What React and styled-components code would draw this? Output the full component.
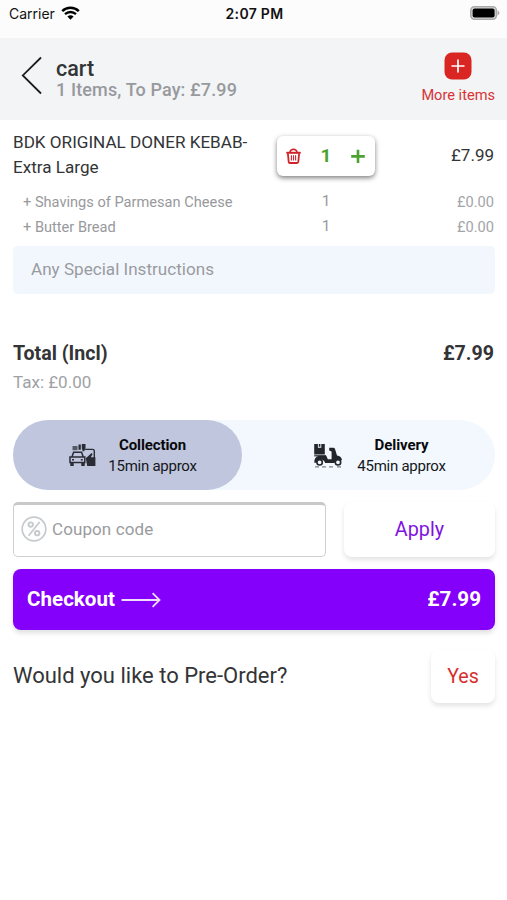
import React, { useState } from 'react';
import styled, { createGlobalStyle } from 'styled-components';

const GlobalStyle = createGlobalStyle`
  * {
    box-sizing: border-box;
  }

  body {
    margin: 0;
    background-color: white;
    color: #333436;
    font-family: Roboto, 'Liberation Sans', sans-serif;
  }

  button,
  input {
    font-family: inherit;
    margin: 0;
    padding: 0;
    border: 0;
    background: none;
    outline: none;
  }

  svg {
    display: block;
    flex: none;
  }
`;

const Screen = styled.div`
  width: 507px;
  height: 900px;
  overflow: hidden;
`;

const Text = styled.span`
  display: block;
  white-space: nowrap;
  color: ${(p) => p.color || '#333436'};
  font-size: ${(p) => p.size}px;
  font-weight: ${(p) => p.weight || 400};
  line-height: ${(p) => p.line || 24}px;
  letter-spacing: ${(p) => p.spacing || 0}px;
`;

const StatusBar = styled.div`
  display: grid;
  grid-template-columns: 1fr auto 1fr;
  align-items: center;
  height: 38px;
  padding: 0 7px 12px 9px;
  background-color: #fcfcfc;
  color: #111;
  font-family: Inter, sans-serif;
  font-size: 14px;
`;

const Carrier = styled.div`
  display: flex;
  align-items: center;
  gap: 6px;
`;

const Clock = styled.div`
  font-weight: 600;
  letter-spacing: 0.3px;
`;

const Battery = styled.div`
  display: flex;
  justify-content: flex-end;
`;

const Header = styled.header`
  display: flex;
  height: 82px;
  padding: 14px 12px 0 21px;
  background-color: #f2f4f6;
`;

const BackButton = styled.button`
  width: 35px;
  height: 46px;
  cursor: pointer;
`;

const Heading = styled.div`
  flex: 1;
  padding-top: 4px;
`;

const MoreItems = styled.button`
  display: flex;
  flex-direction: column;
  align-items: center;
  gap: 5px;
  height: 53px;
  cursor: pointer;
`;

const Content = styled.main`
  padding: 0 12px 0 13px;
`;

const ItemRow = styled.div`
  display: grid;
  grid-template-columns: 264px 98px 1fr;
  height: 70px;
  padding-top: 10px;
`;

const Quantity = styled.div`
  display: flex;
  align-items: center;
  justify-content: space-between;
  height: 40px;
  margin-top: 6px;
  padding: 0 10px 0 9px;
  border-radius: 6px;
  background-color: white;
  box-shadow: 0 2px 5px rgba(0, 0, 0, 0.5);
`;

const IconButton = styled.button`
  cursor: pointer;
`;

const Price = styled.div`
  display: flex;
  justify-content: flex-end;
  padding: ${(p) => p.top || 0}px 1px 0 0;
`;

const Addons = styled.div`
  height: 49px;
`;

const AddonRow = styled.div`
  display: grid;
  grid-template-columns: 254px 98px 1fr;
  height: 24.5px;
  padding-left: 10px;
`;

const AddonCount = styled.div`
  display: flex;
  justify-content: center;
  margin-top: -1px;
`;

const Instructions = styled.input`
  display: block;
  width: 100%;
  height: 48px;
  margin-top: 7px;
  padding: 0 18px 2px;
  border-radius: 5px;
  background-color: #f2f7fe;
  font-size: 17.1px;

  &::placeholder {
    color: #9a9b9e;
    opacity: 1;
  }
`;

const TotalRow = styled.div`
  display: flex;
  justify-content: space-between;
  margin-top: 48px;
`;

const Tax = styled.div`
  margin-top: 4px;
`;

const Switcher = styled.div`
  display: flex;
  height: 70px;
  margin-top: 26px;
  border-radius: 35px;
  background-color: #f2f8fe;
`;

const Option = styled.button`
  display: flex;
  align-items: center;
  justify-content: center;
  gap: ${(p) => p.gap}px;
  width: ${(p) => p.width}px;
  padding-left: ${(p) => p.indent}px;
  border-radius: 35px;
  background-color: ${(p) => (p.selected ? '#c0c6dd' : 'transparent')};
  cursor: pointer;
`;

const OptionLabel = styled.div`
  display: flex;
  flex-direction: column;
  align-items: center;
  padding-top: 1px;
`;

const CouponRow = styled.div`
  display: flex;
  justify-content: space-between;
  height: 55px;
  margin-top: 12px;
`;

const CouponField = styled.label`
  display: flex;
  align-items: center;
  gap: 5px;
  width: 313px;
  padding: 0 8px 3px 7px;
  border: 1px solid #cfcfd1;
  border-top: 3px solid #c9c9ca;
  border-radius: 5px;
`;

const CouponInput = styled.input`
  flex: 1;
  min-width: 0;
  font-size: 17px;
  letter-spacing: 0.1px;

  &::placeholder {
    color: #9a9b9e;
    opacity: 1;
  }
`;

const CardButton = styled.button`
  display: flex;
  align-items: center;
  justify-content: center;
  width: ${(p) => p.width}px;
  height: ${(p) => p.height}px;
  border-radius: 8px;
  background-color: white;
  box-shadow: 0 3px 5px rgba(0, 0, 0, 0.11);
  cursor: pointer;
`;

const Checkout = styled.button`
  display: flex;
  align-items: center;
  width: 100%;
  height: 61px;
  margin-top: 12px;
  padding: 0 14px 2px;
  border-radius: 8px;
  background-color: #8500fa;
  box-shadow: 0 3px 5px rgba(0, 0, 0, 0.13);
  cursor: pointer;

  svg {
    margin: 2px auto 0 6px;
  }
`;

const PreOrder = styled.div`
  display: flex;
  align-items: center;
  justify-content: space-between;
  margin-top: 20px;
`;

const Question = styled.div`
  padding-bottom: 1px;
`;

const WifiIcon = () => (
  <svg width="19" height="14" viewBox="0 0 19 14" fill="none" stroke="#000">
    <path d="M1.2 5.2a12 12 0 0 1 16.6 0" strokeWidth="2.5" />
    <path d="M4 8.2a8 8 0 0 1 11 0" strokeWidth="2.3" />
    <path d="M9.5 13.7 6.4 10.6a4.5 4.5 0 0 1 6.2 0Z" fill="#000" stroke="none" />
  </svg>
);

const BatteryIcon = () => (
  <svg width="30" height="14" viewBox="0 0 30 14">
    <rect x="0.8" y="0.8" width="25.6" height="12.4" rx="3.6" fill="#ddd" stroke="#aaa" strokeWidth="1.6" />
    <rect x="2.6" y="2.4" width="22" height="9.2" rx="2" fill="#000" />
    <path d="M27.6 4.6c2.4.8 2.4 4 0 4.8z" fill="#aaa" />
  </svg>
);

const BackIcon = () => (
  <svg width="22" height="46" viewBox="0 0 22 46" fill="none" stroke="#1c1c1e" strokeWidth="1.8">
    <path d="M20 5.5 1.8 23.4 20 41.5" />
  </svg>
);

const AddIcon = () => (
  <svg width="28" height="28" viewBox="0 0 28 28">
    <rect x="0.5" y="0.5" width="27" height="27" rx="7.5" fill="#d92623" />
    <path d="M14 7.5v13M7.5 14h13" stroke="#fff" strokeWidth="1.7" />
  </svg>
);

const TrashIcon = () => (
  <svg width="15" height="16" viewBox="0 0 15 16" fill="none" stroke="#d2232a" strokeWidth="1.5">
    <path d="M0.3 4.8h14.4" strokeWidth="2" />
    <path d="M3.8 4.4Q4.6 1.3 7.5 1.3t3.7 3.1" />
    <path d="M1.9 5.5l.8 8.3q.1 1.2 1.2 1.2h7.2q1.1 0 1.2-1.2l.8-8.3" strokeWidth="1.8" />
    <path d="M5.4 7.2v5.4M9.6 7.2v5.4M7.5 7.2v5.4" strokeWidth="1.1" />
  </svg>
);

const PlusIcon = () => (
  <svg width="14" height="14" viewBox="0 0 14 14" stroke="#4aa32f" strokeWidth="2.6">
    <path d="M7 0.8v13.2M0.2 7.4h13.6" />
  </svg>
);

const CollectionIcon = () => (
  <svg width="27" height="24" viewBox="0 0 27 24" fill="#292c35">
    <path d="M3.5 3h5v4.2h-5z" opacity="0.7" />
    <path d="M9.5 1.5h2.3v5.3H9.5zM12.8 1h3.7v4.2l-1.3 3h-1.5l-.9-3z" />
    <path
      d="M3.1 13.4 4.6 9.2h8l1.5 4.2M1 14h14.8v5.6H1zM3 16.7h2M11.8 16.7h2"
      fill="none"
      stroke="#292c35"
      strokeWidth="1.5"
    />
    <path d="M1.3 19h3.4v4H1.3zM12.3 19h3.4v4h-3.4z" />
    <path d="M16.2 6.4h7.4q1.7 0 1.7 1.7v7.3" fill="none" stroke="#292c35" strokeWidth="1.4" />
    <path d="M16.8 15.2l5.8-5.3 1 1.3-1.8 3h4.6V23h-8.2z" />
  </svg>
);

const DeliveryIcon = () => (
  <svg width="30" height="25" viewBox="0 0 30 25" fill="#23262b">
    <path d="M1.2 1h3.7v3.8h3.4V1h3.5v10.6H1.2zM5.8 1h1.6v2.8H5.8z" />
    <path d="M16.2 4.7h4.2q1.2 0 1.6 1.2l2 6.6q4 .5 5 4.3l-1.2 1h-2.2q-3.4-1.3-4.2 2.2h-9.3q-.8-3.6-4.8-3.6-3.5 0-3.7 3.4H1.3q-.4-5.4 4.5-7h7.5l1.5 3.5h3.8V8.4l-2.4-.8z" />
    <path d="M1.2 12.2H13v1.2H1.2z" />
    <circle cx="6.6" cy="19.3" r="2.7" fill="#f2f8fe" stroke="#23262b" strokeWidth="1.6" />
    <circle cx="25" cy="19.3" r="2.7" fill="#f2f8fe" stroke="#23262b" strokeWidth="1.6" />
    <path d="M2 23.9h4M9 23.9h4M16 23.9h4M24 23.9h4" stroke="#555" strokeWidth="0.9" />
  </svg>
);

const PercentIcon = () => (
  <svg width="26" height="26" viewBox="0 0 26 26" fill="none" stroke="#c5cacc" strokeWidth="1.7">
    <circle cx="13" cy="13" r="11.8" />
    <circle cx="9.7" cy="8.6" r="2.2" strokeWidth="1.9" />
    <circle cx="16.2" cy="17.2" r="2.2" strokeWidth="1.9" />
    <path d="M18.6 6 7.6 19.8" />
  </svg>
);

const ArrowIcon = () => (
  <svg width="40" height="16" viewBox="0 0 40 16" fill="none" stroke="#f0dcff" strokeWidth="1.8">
    <path d="M0.5 8h38M31.6 1.2 38.5 8l-6.9 6.8" />
  </svg>
);

const addons = [
  { name: 'Shavings of Parmesan Cheese', count: 1, price: '£0.00' },
  { name: 'Butter Bread', count: 1, price: '£0.00' },
];

export default function App() {
  const [method, setMethod] = useState('collection');

  return (
    <Screen>
      <GlobalStyle />
      <StatusBar>
        <Carrier>
          Carrier
          <WifiIcon />
        </Carrier>
        <Clock>2:07 PM</Clock>
        <Battery>
          <BatteryIcon />
        </Battery>
      </StatusBar>
      <Header>
        <BackButton aria-label="Back">
          <BackIcon />
        </BackButton>
        <Heading>
          <Text size={21.5} weight={500} line={25}>
            cart
          </Text>
          <Text size={18} weight={500} line={18} spacing={0.13} color="#98999d">
            1 Items, To Pay: £7.99
          </Text>
        </Heading>
        <MoreItems>
          <AddIcon />
          <Text size={14.6} line={21} color="#d83335">
            More items
          </Text>
        </MoreItems>
      </Header>
      <Content>
        <ItemRow>
          <div>
            <Text size={17.1} line={24.5}>
              BDK ORIGINAL DONER KEBAB-
            </Text>
            <Text size={17.1} line={24.5}>
              Extra Large
            </Text>
          </div>
          <Quantity>
            <IconButton aria-label="Remove">
              <TrashIcon />
            </IconButton>
            <Text size={19} weight={700} color="#4aa32f">
              1
            </Text>
            <IconButton aria-label="Add one">
              <PlusIcon />
            </IconButton>
          </Quantity>
          <Price top={13}>
            <Text size={17}>£7.99</Text>
          </Price>
        </ItemRow>
        <Addons>
          {addons.map((addon) => (
            <AddonRow key={addon.name}>
              <Text size={14.6} color="#98999c">
                + {addon.name}
              </Text>
              <AddonCount>
                <Text size={15.5} color="#98999c">
                  {addon.count}
                </Text>
              </AddonCount>
              <Price>
                <Text size={14.6} color="#a3a4a7">
                  {addon.price}
                </Text>
              </Price>
            </AddonRow>
          ))}
        </Addons>
        <Instructions placeholder="Any Special Instructions" />
        <TotalRow>
          <Text size={19.6} weight={700}>
            Total (Incl)
          </Text>
          <Price>
            <Text size={19.6} weight={700}>
              £7.99
            </Text>
          </Price>
        </TotalRow>
        <Tax>
          <Text size={17} color="#a0a1a5">
            Tax: £0.00
          </Text>
        </Tax>
        <Switcher>
          <Option width={229} gap={12} indent={11} selected={method === 'collection'} onClick={() => setMethod('collection')}>
            <CollectionIcon />
            <OptionLabel>
              <Text size={15} weight={700} line={21} spacing={-0.1} color="#08090c">
                Collection
              </Text>
              <Text size={15} line={21} spacing={-0.25} color="#15171c">
                15min approx
              </Text>
            </OptionLabel>
          </Option>
          <Option width={253} gap={14} indent={22} selected={method === 'delivery'} onClick={() => setMethod('delivery')}>
            <DeliveryIcon />
            <OptionLabel>
              <Text size={15} weight={700} line={21} spacing={-0.1} color="#08090c">
                Delivery
              </Text>
              <Text size={15} line={21} spacing={-0.25} color="#15171c">
                45min approx
              </Text>
            </OptionLabel>
          </Option>
        </Switcher>
        <CouponRow>
          <CouponField>
            <PercentIcon />
            <CouponInput placeholder="Coupon code" />
          </CouponField>
          <CardButton width={151} height={55}>
            <Text size={19.8} color="#7f12e0">
              Apply
            </Text>
          </CardButton>
        </CouponRow>
        <Checkout>
          <Text size={20.6} weight={700} color="#fff">
            Checkout
          </Text>
          <ArrowIcon />
          <Text size={20.6} weight={700} color="#fff">
            £7.99
          </Text>
        </Checkout>
        <PreOrder>
          <Question>
            <Text size={22}>Would you like to Pre-Order?</Text>
          </Question>
          <CardButton width={64} height={53}>
            <Text size={19.6} color="#d5302f">
              Yes
            </Text>
          </CardButton>
        </PreOrder>
      </Content>
    </Screen>
  );
}
